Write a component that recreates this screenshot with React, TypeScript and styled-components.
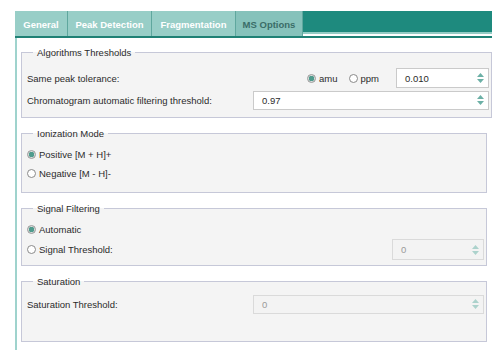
import styled, {createGlobalStyle} from "styled-components";

const GlobalStyle = createGlobalStyle`
  html, body {
    margin: 0;
    padding: 0;
    background: #ffffff;
  }
  body {
    font-family: "Liberation Sans", Arial, sans-serif;
    font-size: 9.5px;
    color: #2b2b2b;
  }
`;

const Container = styled.div`
  margin: 11px 0 0 15px;
  width: 477px;
`;

const TabBar = styled.div`
  display: flex;
  height: 25px;
  border-bottom: 2px solid #1f8175;
`;

const Tab = styled.div<{ $active?: boolean; $width: number }>`
  width: ${props => props.$width}px;
  display: flex;
  align-items: center;
  justify-content: center;
  font-weight: bold;
  font-size: 9.5px;
  background: ${props => props.$active ? "#86c2bb" : "#98cec7"};
  color: ${props => props.$active ? "#3a6d68" : "#ffffff"};
  border-right: 1px solid #5fa79e;
  padding-top: 1px;
  box-sizing: border-box;
`;

const Filler = styled.div`
  flex: 1;
  background: #1e8a7e;
  border-bottom: 2px solid #93ccc5;
  margin-bottom: 2px;
`;

const Panel = styled.div`
  border-left: 2px solid #9fd3cd;
  padding: 9px 0 8px 4px;
  min-height: 302px;
  box-sizing: border-box;
`;

const Group = styled.fieldset<{ $right: number; $bottom: number; $top?: number }>`
  margin: ${props => props.$top ?? 10}px ${props => props.$right}px 0 0;
  padding: 0 2px ${props => props.$bottom}px 5px;
  border: 1px solid #c6c8d8;
  background: #f4f4f4;
  min-inline-size: 0;
`;

const Legend = styled.legend`
  margin-left: 6px;
  padding: 0 4px;
  font-size: 9.5px;
  line-height: 11px;
  color: #2b2b2b;
`;

const Rows = styled.div<{ $pad: number }>`
  padding-top: ${props => props.$pad}px;
  display: flex;
  flex-direction: column;
`;

const Row = styled.div<{ $h: number }>`
  height: ${props => props.$h}px;
  display: flex;
  align-items: center;
`;

const Label = styled.span<{ $w?: number }>`
  width: ${props => props.$w ? props.$w + "px" : "auto"};
  flex-shrink: 0;
`;

const Radios = styled.div`
  margin-left: auto;
  display: flex;
  align-items: center;
  gap: 11px;
  margin-right: 17px;
`;

const RadioItem = styled.label`
  display: flex;
  align-items: center;
  gap: 3px;
`;

const RadioDot = styled.span<{ $checked?: boolean }>`
  width: 9px;
  height: 9px;
  border-radius: 50%;
  box-sizing: border-box;
  border: 1px solid ${props => props.$checked ? "#9a9a9a" : "#8a8a8a"};
  background: ${props => props.$checked ? "radial-gradient(circle, #4f9b8d 0 2.6px, #d8dcdb 3px)" : "#ffffff"};
  flex-shrink: 0;
`;

const Input = styled.div<{ $w?: number; $h: number; $disabled?: boolean }>`
  ${props => props.$w ? `width: ${props.$w}px;` : "flex: 1;"}
  height: ${props => props.$h}px;
  box-sizing: border-box;
  border: 1px solid ${props => props.$disabled ? "#dadada" : "#cacaca"};
  background: ${props => props.$disabled ? "#f3f3f3" : "#ffffff"};
  color: ${props => props.$disabled ? "#9a9a9a" : "#2b2b2b"};
  display: flex;
  align-items: center;
  padding: 0 4px 0 8px;
`;

const PushRight = styled.div`
  margin-left: auto;
  display: flex;
`;

const Value = styled.span`
  flex: 1;
`;

const Spin = styled.span<{ $disabled?: boolean }>`
  display: flex;
  flex-direction: column;
  gap: 2px;
  color: ${props => props.$disabled ? "#acd2cc" : "#6cb0a6"};
`;

function Spinner({disabled}: { disabled?: boolean }) {
    return <Spin $disabled={disabled}>
        <svg width="7" height="4" viewBox="0 0 7 4"><path d="M0 4 L3.5 0 L7 4 Z" fill="currentColor"/></svg>
        <svg width="7" height="4" viewBox="0 0 7 4"><path d="M0 0 L3.5 4 L7 0 Z" fill="currentColor"/></svg>
    </Spin>
}

function Radio({checked, label}: { checked?: boolean, label: string }) {
    return <RadioItem>
        <RadioDot $checked={checked}/>
        <span>{label}</span>
    </RadioItem>
}

export default function App() {
    return <Container>
        <GlobalStyle/>
        <TabBar>
            <Tab $width={53}>General</Tab>
            <Tab $width={84}>Peak Detection</Tab>
            <Tab $width={84}>Fragmentation</Tab>
            <Tab $width={67} $active>MS Options</Tab>
            <Filler/>
        </TabBar>
        <Panel>
            <Group $right={0} $bottom={6} $top={0}>
                <Legend>Algorithms Thresholds</Legend>
                <Rows $pad={9}>
                    <Row $h={22}>
                        <Label>Same peak tolerance:</Label>
                        <Radios>
                            <Radio checked label="amu"/>
                            <Radio label="ppm"/>
                        </Radios>
                        <Input $w={93} $h={20}>
                            <Value>0.010</Value>
                            <Spinner/>
                        </Input>
                    </Row>
                    <Row $h={22}>
                        <Label $w={226}>Chromatogram automatic filtering threshold:</Label>
                        <Input $h={19}>
                            <Value>0.97</Value>
                            <Spinner/>
                        </Input>
                    </Row>
                </Rows>
            </Group>
            <Group $right={5} $bottom={9}>
                <Legend>Ionization Mode</Legend>
                <Rows $pad={6}>
                    <Row $h={19}><Radio checked label="Positive [M + H]+"/></Row>
                    <Row $h={19}><Radio label="Negative [M - H]-"/></Row>
                </Rows>
            </Group>
            <Group $right={5} $bottom={5}>
                <Legend>Signal Filtering</Legend>
                <Rows $pad={6}>
                    <Row $h={19}><Radio checked label="Automatic"/></Row>
                    <Row $h={21}>
                        <Radio label="Signal Threshold:"/>
                        <PushRight>
                            <Input $w={92} $h={21} $disabled>
                                <Value>0</Value>
                                <Spinner disabled/>
                            </Input>
                        </PushRight>
                    </Row>
                </Rows>
            </Group>
            <Group $right={5} $bottom={27}>
                <Legend>Saturation</Legend>
                <Rows $pad={7}>
                    <Row $h={20}>
                        <Label $w={226}>Saturation Threshold:</Label>
                        <Input $h={19} $disabled>
                            <Value>0</Value>
                            <Spinner disabled/>
                        </Input>
                    </Row>
                </Rows>
            </Group>
        </Panel>
    </Container>
}
